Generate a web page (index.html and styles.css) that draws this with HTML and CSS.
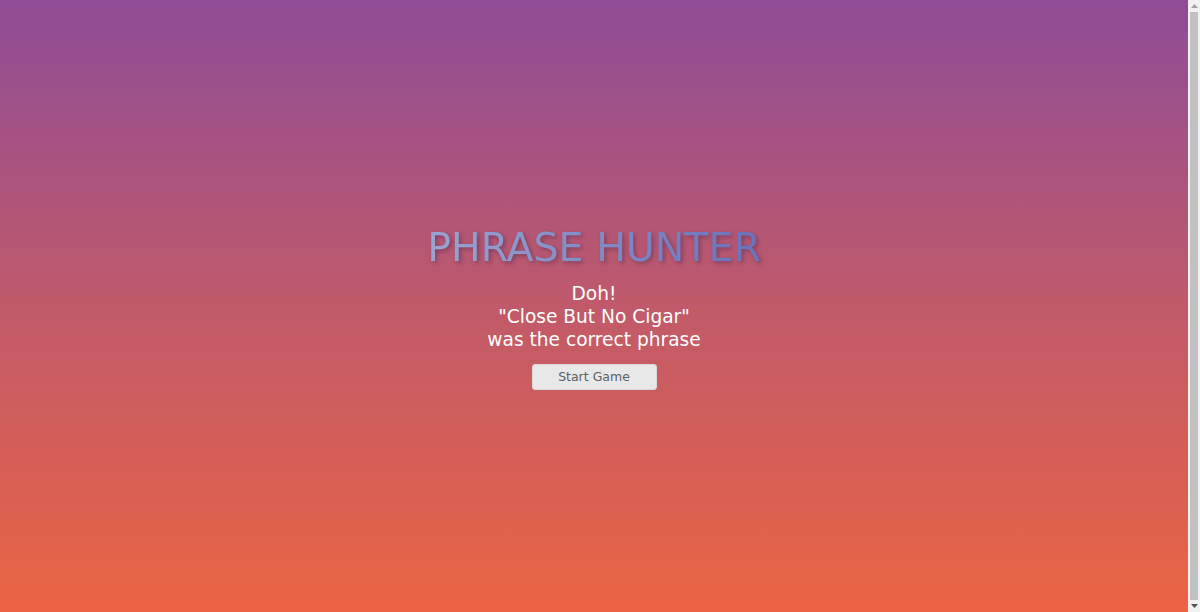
FILE: index.html
```html
<!DOCTYPE html>
<html lang="en">
<head>
<meta charset="utf-8">
<title>Phrase Hunter</title>
<link rel="stylesheet" href="styles.css">
</head>
<body>
<main class="page">
  <div class="overlay">
    <h2 class="title">PHRASE HUNTER</h2>
    <h1 class="message">Doh!<br>"Close But No Cigar"<br>was the correct phrase</h1>
    <button class="btn-reset" type="button">Start Game</button>
  </div>
</main>
<div class="scrollbar" aria-hidden="true">
  <div class="sb-btn">
    <svg width="7" height="4" viewBox="0 0 7 4"><polygon points="3.5,0 7,4 0,4" fill="#a3a3a3"/></svg>
  </div>
  <div class="sb-track"><div class="sb-thumb"></div></div>
  <div class="sb-btn">
    <svg width="7" height="4" viewBox="0 0 7 4"><polygon points="0,0 7,0 3.5,4" fill="#505050"/></svg>
  </div>
</div>
</body>
</html>
```
FILE: styles.css
```css
html, body {
  margin: 0;
  padding: 0;
  height: 100%;
  overflow: hidden;
}
body {
  display: flex;
  font-family: "DejaVu Sans", "Noto Sans", sans-serif;
}
.page {
  flex: 1;
  height: 100vh;
  background: linear-gradient(to bottom, #8e4c96 0%, #c05a6a 50%, #eb6443 100%);
}
.overlay {
  height: 100%;
  display: flex;
  flex-direction: column;
  align-items: center;
  justify-content: center;
  text-align: center;
  box-sizing: border-box;
}
.title {
  margin: 0 0 2px;
  font-size: 39.5px;
  font-weight: 400;
  line-height: 48px;
  background: linear-gradient(to right, #98a5d2, #6a72bb);
  -webkit-background-clip: text;
  background-clip: text;
  color: transparent;
  filter: drop-shadow(2px 2px 2px rgba(60, 30, 60, 0.45));
}
.message {
  margin: 9px 0 0;
  font-size: 18.6px;
  font-weight: 400;
  line-height: 23px;
  color: #ffffff;
}
.btn-reset {
  margin-top: 13px;
  width: 125px;
  height: 26px;
  border: 1px solid #d9d9d9;
  border-radius: 3px;
  background: #e8e8e8;
  color: #5a5f63;
  font-family: inherit;
  font-size: 12.5px;
  padding: 0;
}
.scrollbar {
  width: 12px;
  height: 100vh;
  background: #f1f1f1;
  display: flex;
  flex-direction: column;
}
.sb-btn {
  height: 12px;
  display: flex;
  align-items: center;
  justify-content: center;
}
.sb-track {
  flex: 1;
  padding: 0 2px;
}
.sb-thumb {
  height: 100%;
  background: #c1c1c1;
}
```
